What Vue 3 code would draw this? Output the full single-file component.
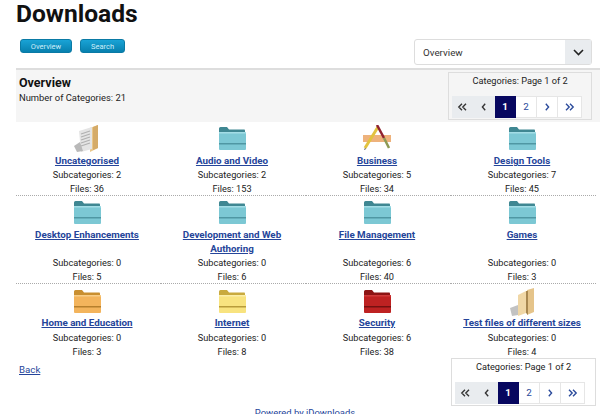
<script setup>
const cats = [
  { name: 'Uncategorised', subs: 2, files: 36, icon: 'open' },
  { name: 'Audio and Video', subs: 2, files: 153, icon: 'teal' },
  { name: 'Business', subs: 5, files: 34, icon: 'app' },
  { name: 'Design Tools', subs: 7, files: 45, icon: 'teal' },
  { name: 'Desktop Enhancements', subs: 0, files: 5, icon: 'teal' },
  { name: 'Development and Web Authoring', subs: 0, files: 6, icon: 'teal' },
  { name: 'File Management', subs: 6, files: 40, icon: 'teal' },
  { name: 'Games', subs: 0, files: 3, icon: 'teal' },
  { name: 'Home and Education', subs: 0, files: 3, icon: 'orange' },
  { name: 'Internet', subs: 0, files: 8, icon: 'yellow' },
  { name: 'Security', subs: 6, files: 38, icon: 'red' },
  { name: 'Test files of different sizes', subs: 0, files: 4, icon: 'open2' }
]
const palettes = {
  teal: ['#3f8792', '#7cc8d4', '#4f97a3', '#a3dde6'],
  orange: ['#c98f30', '#f3b45c', '#b67f2c', '#f8cd87'],
  yellow: ['#c9aa3e', '#f8e37f', '#b89c3a', '#fbeea8'],
  red: ['#8c1414', '#be2222', '#741010', '#cf3a3a']
}
const pages = [
  { k: 'first', d: 'M6 1L2 5l4 4M11 1L7 5l4 4', c: 'pg muted' },
  { k: 'prev', d: 'M7.500 1L4 5l3.500 4', c: 'pg muted' },
  { k: '1', t: '1', c: 'pg active' },
  { k: '2', t: '2', c: 'pg' },
  { k: 'next', d: 'M4.500 1L8 5l-3.500 4', c: 'pg' },
  { k: 'last', d: 'M1 1l4 4-4 4M6 1l4 4-4 4', c: 'pg' }
]
</script>

<template>
  <div class="page">
    <h1 class="title">Downloads</h1>
    <div class="toolbar">
      <div class="btns">
        <a class="btn btn-a">Overview</a>
        <a class="btn btn-b">Search</a>
      </div>
      <div class="select">
        <span class="select-text">Overview</span>
        <span class="select-arrow">
          <svg width="11" height="7" viewBox="0 0 11 7"><path d="M1 1l4.500 4.500L10 1" fill="none" stroke="#222" stroke-width="1.600"/></svg>
        </span>
      </div>
    </div>
    <div class="band">
      <div class="band-left">
        <div class="band-title">Overview</div>
        <div class="band-sub">Number of Categories: 21</div>
      </div>
      <div class="pager pager-top">
        <div class="pager-label">Categories: Page 1 of 2</div>
        <div class="pager-row">
          <span v-for="p in pages" :key="p.k" :class="p.c">
            <template v-if="p.t">{{ p.t }}</template>
            <svg v-else width="10" height="8" viewBox="0 0 12 10"><path :d="p.d" fill="none" stroke="currentColor" stroke-width="1.700"/></svg>
          </span>
        </div>
      </div>
    </div>
    <div class="grid">
      <div v-for="(c, i) in cats" :key="c.name" class="cell" :class="{ 'row-end': i < 8, 'row-last': i >= 8, 'row-two': i >= 4 && i < 8 }">
        <div class="icon">
          <svg v-if="palettes[c.icon]" width="28" height="24" viewBox="0 0 28 24">
            <path d="M1 2.500Q1 1 2.500 1H9l2 2.500h15.500Q27 3.500 27 5V7H1z" :fill="palettes[c.icon][0]"/>
            <rect x="1" y="6" width="27" height="18" rx="1" :fill="palettes[c.icon][1]"/>
            <rect x="1" y="6" width="27" height="1.500" :fill="palettes[c.icon][3]"/>
            <rect x="1" y="17" width="27" height="1.500" :fill="palettes[c.icon][2]"/>
          </svg>
          <svg v-else-if="c.icon === 'open'" class="tall" width="26" height="28" viewBox="0 0 26 28">
            <path d="M16 3l8-3v23l-8 4z" fill="#e9c68a"/>
            <path d="M19 2l5-2v23l-5 2z" fill="#d5ab68"/>
            <path d="M5 6l13-4v22L7 27z" fill="#e4e4e4"/>
            <path d="M7 9l9-3M7 12l9-3M7 15l9-3M7 18l9-3M7 21l9-3" stroke="#b0b0b0" stroke-width="1.200"/>
            <path d="M0 21l6-4 3 9-6 1z" fill="#b9b9b9"/>
          </svg>
          <svg v-else-if="c.icon === 'open2'" class="tall" width="26" height="28" viewBox="0 0 26 28">
            <path d="M9 7l8-4v22l-8 3z" fill="#f0d7a6"/>
            <path d="M18 2l7-2v24l-7 3z" fill="#e5c48a"/>
            <path d="M17 3h2v24l-2-2z" fill="#a88750"/>
            <path d="M1 20l8-3v10l-6 1z" fill="#c2c2c2"/>
          </svg>
          <svg v-else width="30" height="25" viewBox="0 0 30 25">
            <rect x="1" y="10" width="28" height="7" fill="#eeb27c"/>
            <path d="M16 2L3 23" stroke="#e2c340" stroke-width="3"/>
            <path d="M3 23l-1 2 2-1z" fill="#333"/>
            <path d="M15 0l7 13" stroke="#8f2230" stroke-width="2.500"/>
            <path d="M22 13l5 10" stroke="#8d9a55" stroke-width="2.500"/>
          </svg>
        </div>
        <a class="cat-link">{{ c.name }}</a>
        <div class="meta">Subcategories: {{ c.subs }}</div>
        <div class="meta last">Files: {{ c.files }}</div>
      </div>
    </div>
    <div class="bottom">
      <a class="back">Back</a>
      <div class="pager pager-bottom">
        <div class="pager-label">Categories: Page 1 of 2</div>
        <div class="pager-row">
          <span v-for="p in pages" :key="p.k" :class="p.c">
            <template v-if="p.t">{{ p.t }}</template>
            <svg v-else width="10" height="8" viewBox="0 0 12 10"><path :d="p.d" fill="none" stroke="currentColor" stroke-width="1.700"/></svg>
          </span>
        </div>
      </div>
    </div>
    <div class="footer"><a>Powered by jDownloads</a></div>
  </div>
</template>

<style>
html, body { margin: 0; overflow: hidden; background: #fff; }
</style>

<style scoped>
.page {
  width: 600px;
  height: 414px;
  overflow: hidden;
  padding-left: 16px;
  box-sizing: border-box;
  font-family: Roboto, "Noto Sans", sans-serif;
  font-size: 10px;
  color: #222;
}
.title {
  margin: 0;
  font-size: 24.600px;
  line-height: 27px;
  font-weight: 700;
  color: #111;
}
.toolbar {
  display: flex;
  justify-content: space-between;
  align-items: flex-start;
  margin-top: 12px;
  padding-right: 8px;
}
.btns { display: flex; gap: 8px; padding-left: 4px; }
.btn {
  height: 14px;
  line-height: 13px;
  box-sizing: border-box;
  border-radius: 3px;
  background: linear-gradient(#19a3d6, #0780ae);
  border: 1px solid #0a7aa5;
  color: #cdeefa;
  font-size: 7.500px;
  text-align: center;
}
.btn-a { width: 52px; }
.btn-b { width: 45px; }
.select {
  width: 178px;
  height: 26px;
  box-sizing: border-box;
  border: 1px solid #ddd;
  border-radius: 3px;
  display: flex;
  align-items: center;
  justify-content: space-between;
}
.select-text { padding-left: 8px; font-size: 9.800px; color: #333; }
.select-arrow {
  width: 26px;
  height: 100%;
  background: #e9ecef;
  display: flex;
  align-items: center;
  justify-content: center;
}
.band {
  margin-top: 3px;
  border-top: 2px solid #ddd;
  background: #f5f5f5;
  height: 52px;
  display: flex;
  justify-content: space-between;
  align-items: flex-start;
  padding-right: 8px;
}
.band-left { padding: 5px 0 0 3px; }
.band-title { font-size: 12.500px; line-height: 15px; font-weight: 700; color: #111; }
.band-sub { font-size: 9.400px; line-height: 15px; }
.pager {
  width: 144px;
  height: 48px;
  box-sizing: border-box;
  border: 1px solid #ddd;
  text-align: center;
}
.pager-top { margin-top: 2px; }
.pager-label { font-size: 9.200px; line-height: 13px; padding-top: 1px; }
.pager-row { display: flex; margin: 9px 0 0 3px; }
.pg {
  width: 21px;
  height: 22px;
  box-sizing: border-box;
  border: 1px solid #e6e6e6;
  border-left: 0;
  background: #fff;
  color: #2a4a9b;
  display: flex;
  align-items: center;
  justify-content: center;
  font-size: 9.800px;
  line-height: 1;
}
.pg:nth-child(2) { width: 22px; }
.pg:nth-child(6) { width: 24px; }
.muted { background: #e9ecef; color: #333; border-color: #e9ecef; }
.active { background: #07075f; color: #fff; border-color: #07075f; font-weight: 700; }
.grid {
  display: grid;
  grid-template-columns: repeat(4, 145px);
  width: 580px;
}
.cell {
  text-align: center;
  box-sizing: border-box;
  padding: 4px 3px 0 0;
  min-width: 0;
}
.row-end { border-bottom: 1px dotted #aaa; }
.row-last { padding-top: 5px; }
.icon {
  height: 24px;
  display: flex;
  justify-content: center;
  align-items: flex-end;
}
.tall { flex: none; margin-bottom: -3px; }
.cat-link {
  display: block;
  margin-top: 4px;
  padding: 0 12px;
  font-size: 9.800px;
  line-height: 14px;
  font-weight: 700;
  color: #25459a;
  text-decoration: underline;
}
.row-last .cat-link { margin-top: 3px; padding-bottom: 1px; }
.meta { font-size: 9.200px; line-height: 14px; }
.meta.last { margin-bottom: -1px; }
.row-two .cat-link { min-height: 28px; }
.bottom {
  display: flex;
  justify-content: space-between;
  align-items: flex-start;
  padding-right: 4px;
}
.back {
  margin: 5px 0 0 3px;
  font-size: 9.700px;
  line-height: 14px;
  color: #25459a;
  text-decoration: underline;
}
.pager-bottom { width: 145px; }
.footer {
  text-align: center;
  margin: 0 0 0 -16px;
  padding-left: 10px;
  font-size: 9.450px;
  line-height: 13px;
  color: #25459a;
}
</style>
